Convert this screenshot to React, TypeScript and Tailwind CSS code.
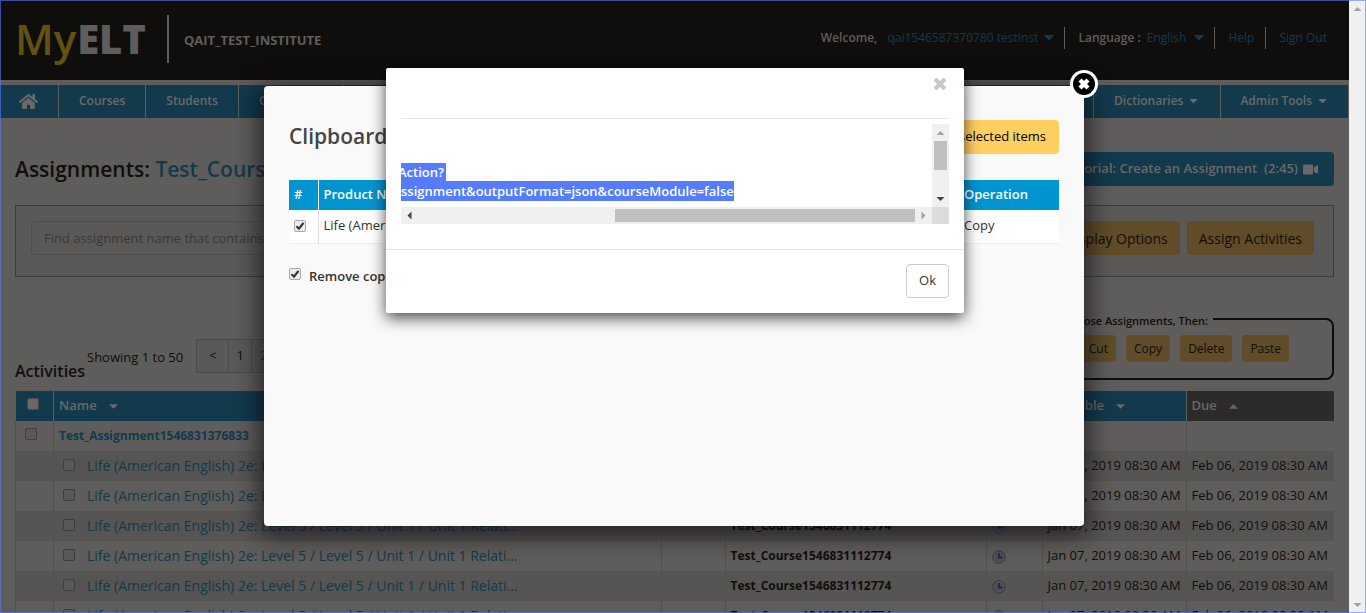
import type { ReactNode } from 'react';
import { FaCaretDown, FaHome, FaVideo } from 'react-icons/fa';

function Check({ checked, label, dim, light }: { checked?: boolean; label: string; dim?: boolean; light?: boolean }) {
  const tone = dim
    ? light
      ? 'border-[#4a4847] bg-[#6a6866]'
      : 'border-[#3f3e3d] bg-[#5a5856]'
    : 'border-[#a8a8a8] bg-[#ececec]';
  return (
    <span className="relative block size-3">
      <input
        type="checkbox"
        aria-label={label}
        defaultChecked={checked}
        className={`block size-3 appearance-none rounded-xs border ${tone}`}
      />
      {checked && (
        <svg viewBox="0 0 12 12" className="pointer-events-none absolute inset-0 size-3">
          <path d="M2.5 6.2 L5 8.7 L9.5 2.8" fill="none" stroke="#333" strokeWidth="2.2" />
        </svg>
      )}
    </span>
  );
}

function Triangle({ up }: { up?: boolean }) {
  return (
    <svg viewBox="0 0 10 5" className="h-[5px] w-[9px]">
      <path d={up ? 'M0 5 L5 0 L10 5Z' : 'M0 0 L10 0 L5 5Z'} fill="currentColor" />
    </svg>
  );
}

function DropMark() {
  return (
    <svg viewBox="0 0 10 6" className="h-[6px] w-[10px]">
      <path d="M0 0 H10 L5 6Z" fill="currentColor" />
    </svg>
  );
}

function NavItem({ children, wide }: { children: ReactNode; wide?: boolean }) {
  return (
    <a
      href="#"
      className={`flex items-center gap-1 border-r border-[#5f5d5b] pb-[2px] text-[12px] font-semibold ${wide ? 'px-5' : 'px-[19px]'}`}
    >
      {children}
    </a>
  );
}

function Clock() {
  return (
    <svg viewBox="0 0 14 14" className="mt-[2px] size-[14px]">
      <circle cx="7" cy="7" r="6.2" fill="#4c4c58" stroke="#3c3b3c" strokeWidth="1" />
      <circle cx="7" cy="7" r="4.8" fill="none" stroke="#5c5c66" strokeWidth="0.8" />
      <path d="M7 3 V7.5 H10.5" fill="none" stroke="#1f1f30" strokeWidth="1.3" />
    </svg>
  );
}

const GOLD = 'rounded-sm bg-[#604c28] text-[#100e0c]';

function PageHeader() {
  return (
    <header className="flex h-20 items-start justify-between bg-[#100e0c] pr-[22px] pl-[15px]">
      <div className="flex pt-[15px]">
        <a href="#" className="flex h-12 w-[131px] items-center justify-between leading-none">
          <span className="text-[42px] font-semibold text-[#635110]">My</span>
          <span className="text-[40px] font-extrabold text-[#5f5d5b]">ELT</span>
        </a>
        <div className="ml-[21px] flex h-12 items-center border-l-2 border-[#5f5d5b] pt-[3px] pl-[15px] text-[13px] font-bold text-[#5f5d5b]">
          QAIT_TEST_INSTITUTE
        </div>
      </div>
      <div className="mt-[27px] flex h-[22px] items-stretch text-[12px] text-[#123a4c]">
        <div className="flex items-center border-r border-[#5f5d5b] pr-[10px]">
          <span className="font-semibold text-[#5f5d5b]">Welcome,</span>
          <a href="#" className="ml-[10px] flex items-center gap-[6px]">
            qai1546587370780 testInst <DropMark />
          </a>
        </div>
        <div className="flex items-center border-r border-[#5f5d5b] pr-[10px] pl-[13px]">
          <span className="font-semibold text-[#5f5d5b]">Language :</span>
          <a href="#" className="ml-[6px] flex items-center gap-2">
            English <DropMark />
          </a>
        </div>
        <a href="#" className="flex items-center border-r border-[#5f5d5b] pr-[11px] pl-[13px]">
          Help
        </a>
        <a href="#" className="flex items-center pl-[13px]">
          Sign Out
        </a>
      </div>
    </header>
  );
}

function MainNav() {
  return (
    <nav className="mt-[5px] flex h-[33px] justify-between bg-[#123a4c] text-[#6b6967]">
      <div className="flex">
        <a href="#" aria-label="Home" className="flex w-[59px] items-center justify-center border-r border-[#5f5d5b] pr-[2px]">
          <FaHome className="size-[19px]" />
        </a>
        <NavItem wide>Courses</NavItem>
        <NavItem wide>Students</NavItem>
        <NavItem wide>Gradebook</NavItem>
      </div>
      <div className="flex border-l border-[#5f5d5b]">
        <NavItem wide>
          Dictionaries <FaCaretDown className="size-[13px]" />
        </NavItem>
        <NavItem>
          Admin Tools <FaCaretDown className="size-[13px]" />
        </NavItem>
      </div>
    </nav>
  );
}

function Toolbar() {
  return (
    <>
      <div className="mt-[34px] flex items-center justify-between">
        <h1 className="text-[21px] leading-8 font-semibold text-[#100e0c]">
          Assignments: <a href="#" className="text-[#123a4c]">Test_Course</a>
        </h1>
        <button className="flex h-[34px] items-center gap-[5px] rounded-sm bg-[#123a4c] px-4 text-[13px] font-semibold text-[#6b6967]">
          Tutorial: Create an Assignment&nbsp; (2:45) <FaVideo className="size-[15px]" />
        </button>
      </div>
      <div className="mt-[19px] flex h-[72px] items-start justify-between border border-[#3f3d3b] bg-[#5b5957] pt-[15px] pr-[19px] pl-[15px]">
        <input
          type="text"
          aria-label="Find assignment"
          placeholder="Find assignment name that contains"
          className="h-[34px] w-80 rounded-sm border border-[#504e4c] px-3 text-[13px] text-[#100e0c] placeholder:text-[#3a3836]"
        />
        <div className="flex gap-[7px]">
          <button className={`h-[34px] px-3 text-[14px] ${GOLD}`}>Display Options</button>
          <button className={`h-[34px] px-3 text-[14px] ${GOLD}`}>Assign Activities</button>
        </div>
      </div>
    </>
  );
}

function ActivityControls() {
  return (
    <div className="flex h-[114px] justify-between text-[#100e0c]">
      <div className="flex items-end pb-[18px]">
        <h2 className="-mb-[10px] w-[72px] text-[16px] leading-6 font-semibold">Activities</h2>
        <span className="pb-[6px] text-[13px] leading-5">Showing 1 to 50</span>
        <div className="ml-[13px] flex h-[34px] border border-[#4e4c4b] bg-[#5b5957] text-[13px]">
          <button className="w-8 border-r border-[#4e4c4b]">&lt;</button>
          <button className="w-[23px] border-r border-[#4e4c4b]">1</button>
          <button className="w-[23px] text-[#123a4c]">2</button>
        </div>
      </div>
      <fieldset className="mt-[31px] h-[72px] w-[330px] rounded-lg border-2 border-[#100e0c] pr-[43px]">
        <legend className="mr-[76px] ml-auto px-[5px] pt-1 text-[11px] leading-[18px] font-semibold">
          Choose Assignments, Then:
        </legend>
        <div className="flex justify-end gap-[10px] pt-[5px] text-[12px]">
          <button className={`h-[27px] px-2 ${GOLD}`}>Cut</button>
          <button className={`h-[27px] px-2 ${GOLD}`}>Copy</button>
          <button className={`h-[27px] px-2 ${GOLD}`}>Delete</button>
          <button className={`h-[27px] px-2 ${GOLD}`}>Paste</button>
        </div>
      </fieldset>
    </div>
  );
}

const activities = Array.from({ length: 7 }, (_, i) => i);
const CELL = 'border-l border-[#535150] px-[5px]';

function ActivityTable() {
  return (
    <table className="w-full table-fixed border-collapse text-left text-[13px] text-[#100e0c]">
      <colgroup>
        <col className="w-[38px]" />
        <col />
        <col className="w-16" />
        <col className="w-[261px]" />
        <col className="w-14" />
        <col className="w-36" />
        <col className="w-[148px]" />
      </colgroup>
      <thead>
        <tr className="h-[30px] bg-[#123a4c] text-[#6b6967]">
          <th>
            <div className="flex justify-center pr-[2px] pb-1"><Check dim light label="Select all" /></div>
          </th>
          <th className="border-l border-[#5f5d5b] px-[5px] font-semibold">
            <div className="flex items-center gap-3">Name <Triangle /></div>
          </th>
          <th />
          <th className="px-[5px] font-semibold">Course</th>
          <th />
          <th className="px-[5px] font-semibold">
            <div className="flex items-center gap-3">Available <Triangle /></div>
          </th>
          <th className="border-l border-[#5f5d5b] bg-[#2d2b29] px-[5px] font-semibold">
            <div className="flex items-center gap-3">Due <Triangle up /></div>
          </th>
        </tr>
      </thead>
      <tbody>
        <tr className="h-[30px]">
          <td className={CELL}>
            <div className="flex pb-1 pl-[4px]"><Check dim label="Test_Assignment1546831376833" /></div>
          </td>
          <td className={`${CELL} text-[12px] font-bold`}><a href="#" className="text-[#123a4c]">Test_Assignment1546831376833</a></td>
          <td className={CELL} /><td className={CELL} /><td className={CELL} /><td className={CELL} /><td className={CELL} />
        </tr>
        {activities.map((i) => (
          <tr key={i} className="h-[30px] odd:bg-[#5f5d5b] even:bg-[#575553]">
            <td className={CELL} />
            <td className={CELL}>
              <div className="flex items-center gap-3 pl-1">
                <div className="pb-[3px]"><Check dim label={`Activity ${i + 1}`} /></div>
                <a href="#" className="text-[14px] leading-5 whitespace-nowrap text-[#123a4c]">
                  Life (American English) 2e: Level 5 / Level 5 / Unit 1 / Unit 1 Relati...
                </a>
              </div>
            </td>
            <td className={CELL} />
            <td className={`${CELL} text-[12px] font-bold`}>Test_Course1546831112774</td>
            <td className={CELL}><Clock /></td>
            <td className={`${CELL} whitespace-nowrap`}>Jan 07, 2019 08:30 AM</td>
            <td className={`${CELL} whitespace-nowrap`}>Feb 06, 2019 08:30 AM</td>
          </tr>
        ))}
      </tbody>
    </table>
  );
}

function ClipboardDialog() {
  return (
    <div className="absolute inset-0 flex items-start justify-center pt-[86px] pr-px">
      <section
        role="dialog"
        aria-label="Clipboard"
        className="relative h-[440px] w-[820px] rounded-sm bg-[#f9f9f9] px-[25px] pt-[34px] text-[13px] text-[#333] shadow-[0_5px_25px_5px_rgba(10,5,15,0.65)]"
      >
        <button aria-label="Close" className="absolute -top-4 -right-[14px]">
          <svg viewBox="0 0 28 28" className="size-7">
            <circle cx="14" cy="14" r="14" fill="#fff" />
            <circle cx="14" cy="14" r="11" fill="#000" />
            <path d="M10 10 L18 18 M18 10 L10 18" stroke="#fff" strokeWidth="4.4" />
          </svg>
        </button>
        <div className="flex items-center justify-between">
          <h2 className="text-[21px] font-semibold text-[#444]">Clipboard</h2>
          <button className="h-[34px] rounded-sm bg-[#ffcf61] px-[13px] text-black">Paste selected items</button>
        </div>
        <table className="mt-[26px] w-full table-fixed border-collapse text-left">
          <thead>
            <tr className="h-[30px] bg-[#0095d0] text-white">
              <th className="w-[29px] px-[5px] font-semibold">#</th>
              <th className="border-l border-white px-[5px] font-semibold">Product Name</th>
              <th className="w-[100px] px-[5px] font-semibold">Operation</th>
            </tr>
          </thead>
          <tbody>
            <tr className="h-[33px] border-b border-[#eee] bg-white">
              <td className="px-[5px]"><Check checked label="Select Life" /></td>
              <td className="border-l border-[#ddd] px-[5px] pb-[2px]">Life (American English) 2e</td>
              <td className="px-[5px] pb-[2px]">Copy</td>
            </tr>
          </tbody>
        </table>
        <div className="mt-[23px] flex items-center gap-2">
          <div className="pb-1"><Check checked label="Remove copied items" /></div>
          <span className="font-semibold">Remove copied items</span>
        </div>
      </section>
    </div>
  );
}

function Arrow({ d, dark }: { d: string; dark?: boolean }) {
  return (
    <svg viewBox="0 0 17 17" className="size-[17px] shrink-0">
      <path d={d} fill={dark ? '#444' : '#a3a3a3'} />
    </svg>
  );
}

const UP = 'M4.5 11 L8.5 7 L12.5 11Z';
const DOWN = 'M4.5 7 L8.5 11 L12.5 7Z';
const LEFT = 'M10.5 4.5 L6.5 8.5 L10.5 12.5Z';
const RIGHT = 'M6.5 4.5 L10.5 8.5 L6.5 12.5Z';

function MessageDialog() {
  return (
    <div className="absolute inset-0 flex items-start justify-center pt-[68px] pl-px">
      <section
        role="alertdialog"
        aria-label="Message"
        className="w-[578px] rounded-xs bg-white text-[13px] text-[#333] shadow-[0_5px_15px_rgba(0,0,0,0.7)]"
      >
        <div className="mx-[15px] flex h-[51px] items-start justify-end border-b border-[#e5e5e5] pt-[9px]">
          <button aria-label="Dismiss" className="pr-[2px]">
            <svg viewBox="0 0 14 14" className="size-[14px]">
              <path d="M2 2 L12 12 M12 2 L2 12" stroke="#c9c9c9" strokeWidth="4" />
            </svg>
          </button>
        </div>
        <div className="mx-[15px] mt-[5px] grid h-[100px] grid-cols-[1fr_17px] grid-rows-[1fr_17px]">
          <div className="overflow-hidden pt-[39px] whitespace-nowrap text-white">
            <div className="flex flex-col items-start font-semibold">
              <span className="bg-[#557cff] pr-[2px] leading-[18px]"><span className="-ml-[3px]">Action?</span></span>
              <span className="bg-[#557cff] leading-5">ssignment&amp;outputFormat=json&amp;courseModule=false</span>
            </div>
          </div>
          <div className="flex flex-col bg-[#f0f0f0]">
            <Arrow d={UP} />
            <div className="mx-[2px] h-[29px] bg-[#c0c0c0]" />
            <div className="flex-1" />
            <Arrow d={DOWN} dark />
          </div>
          <div className="flex bg-[#f0f0f0]">
            <Arrow d={LEFT} dark />
            <div className="flex-1" />
            <div className="my-[2px] w-[300px] bg-[#c0c0c0]" />
            <Arrow d={RIGHT} />
          </div>
          <div className="bg-[#dcdcdc]" />
        </div>
        <div className="mt-[25px] flex justify-end border-t border-[#e5e5e5] px-[15px] pt-[14px] pb-[15px]">
          <button className="h-[34px] rounded-sm border border-[#ccc] bg-white px-3">Ok</button>
        </div>
      </section>
    </div>
  );
}

export default function App() {
  return (
    <div className="relative flex h-screen overflow-hidden bg-[#5f5d5b] font-['Open_Sans','Noto_Sans',sans-serif]">
      <div className="relative min-w-0 flex-1 overflow-hidden">
        <PageHeader />
        <MainNav />
        <main className="px-[15px]">
          <Toolbar />
          <ActivityControls />
          <ActivityTable />
        </main>
        <ClipboardDialog />
        <MessageDialog />
      </div>
      <div className="flex w-[17px] flex-col justify-between bg-[#f0f0f0]">
        <Arrow d={UP} />
        <Arrow d={DOWN} />
      </div>
      <div className="pointer-events-none absolute inset-0 border border-[#557cff]/60" />
    </div>
  );
}
